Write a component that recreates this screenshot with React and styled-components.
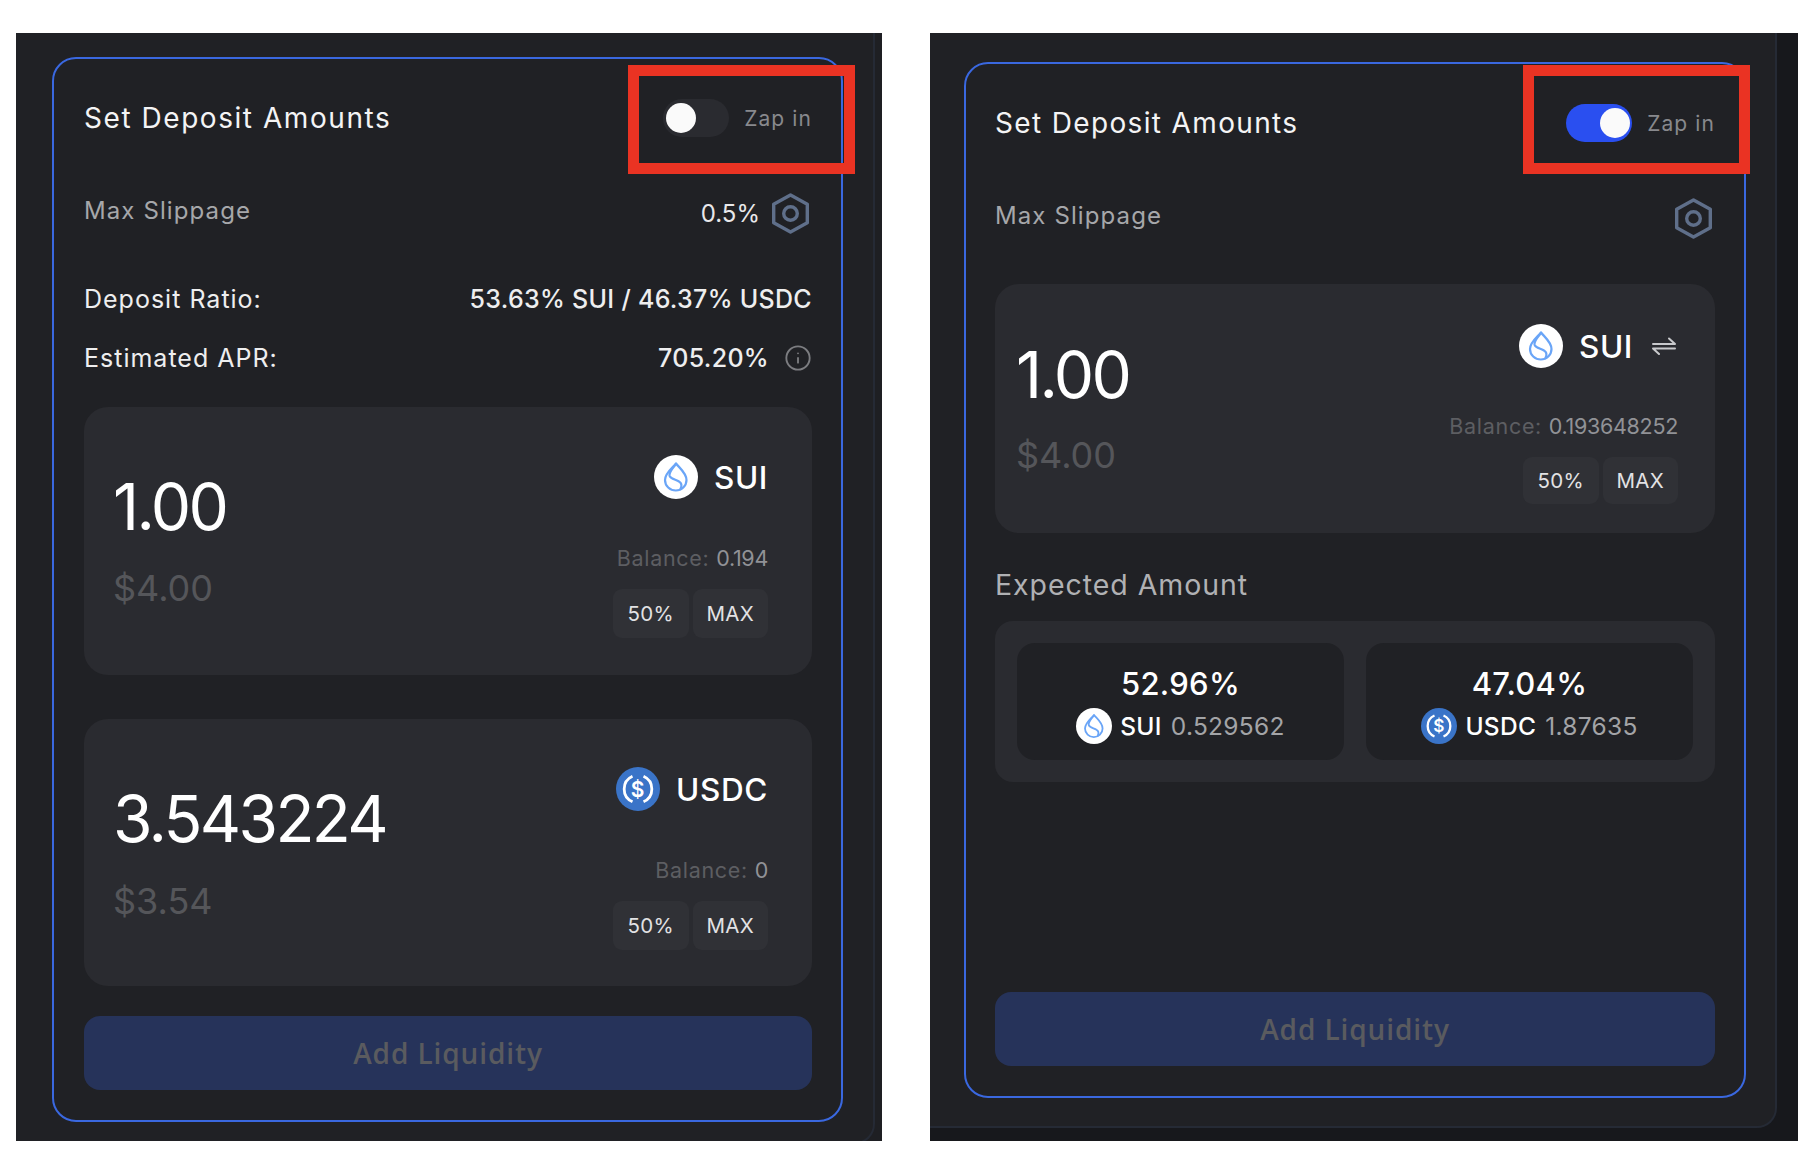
import React from 'react';
import styled, { createGlobalStyle } from 'styled-components';
import { Info } from 'lucide-react';

const Global = createGlobalStyle`
  html, body { margin: 0; padding: 0; background: #fff; }
  body { font-family: 'Inter', 'Liberation Sans', sans-serif; }
`;

const Page = styled.div`
  display: flex;
  gap: 48px;
  width: 1814px;
  height: 1162px;
  padding: 33px 16px 20px;
  box-sizing: border-box;
`;

const Panel = styled.div`
  width: ${p => p.$width}px;
  height: 1108px;
  overflow: hidden;
  background: ${p => p.$bg};
`;

const PanelInner = styled.div`
  box-sizing: border-box;
  width: ${p => p.$width}px;
  height: ${p => p.$height}px;
  padding: ${p => p.$top}px 0 0 ${p => p.$left}px;
  background: #202125;
  border-right: 2px solid #252a35;
  border-bottom: 2px solid #252a35;
  border-bottom-right-radius: 20px;
`;

const DepositCard = styled.section`
  position: relative;
  box-sizing: border-box;
  display: flex;
  flex-direction: column;
  width: ${p => p.$width}px;
  height: ${p => p.$height}px;
  padding: 40px 29px 30px ${p => p.$left}px;
  border: 2px solid #3a68e0;
  border-radius: 24px;
  color: #fff;
`;

const Annotation = styled.div`
  position: absolute;
  top: ${p => p.$top}px;
  right: ${p => p.$right}px;
  box-sizing: border-box;
  width: 227px;
  height: 109px;
  border: 11px solid #ea3323;
`;

const Header = styled.div`
  display: flex;
  align-items: center;
  justify-content: space-between;
  height: 38px;
`;

const Title = styled.h2`
  margin: 0;
  font-size: 28px;
  font-weight: 400;
  letter-spacing: ${p => (p.$tight ? 1.35 : 1.55)}px;
  color: #f4f4f5;
`;

const ZapGroup = styled.div`
  display: flex;
  align-items: center;
  gap: 15px;
`;

const Track = styled.div`
  box-sizing: border-box;
  display: flex;
  align-items: center;
  justify-content: ${p => (p.$on ? 'flex-end' : 'flex-start')};
  width: 66px;
  height: 38px;
  padding: 0 ${p => (p.$on ? 2 : 3)}px;
  border-radius: 19px;
  background: ${p => (p.$on ? '#2a4ff0' : '#2a2b30')};
`;

const Knob = styled.div`
  width: 30px;
  height: 30px;
  border-radius: 50%;
  background: #fafafa;
`;

const ZapLabel = styled.span`
  font-size: 21px;
  letter-spacing: 1.1px;
  color: #88898d;
`;

const SlippageRow = styled.div`
  display: flex;
  align-items: center;
  justify-content: space-between;
  height: 41px;
  margin-top: 56px;
  padding-right: 3px;
`;

const SlippageLabel = styled.span`
  position: relative;
  top: -3px;
  font-size: 24px;
  letter-spacing: 1.1px;
  color: #a6a7aa;
`;

const SlippageValue = styled.div`
  display: flex;
  align-items: center;
  gap: 12px;
  font-size: 24px;
  color: #e8e8ea;
`;

const InfoRow = styled.div`
  display: flex;
  align-items: center;
  justify-content: space-between;
  height: 30px;
  margin-top: ${p => p.$top}px;
  font-size: 25px;
  letter-spacing: 1px;
  color: #eeeeef;
`;

const InfoValue = styled.div`
  display: flex;
  align-items: center;
  gap: 15px;
  font-weight: 500;
  letter-spacing: 0.3px;
`;

const TokenCard = styled.div`
  box-sizing: border-box;
  display: flex;
  justify-content: space-between;
  flex: none;
  height: ${p => p.$height}px;
  margin-top: ${p => p.$top}px;
  padding: 0 ${p => p.$right}px 0 ${p => p.$left}px;
  border-radius: 24px;
  background: #2a2b30;
`;

const AmountColumn = styled.div`
  display: flex;
  flex-direction: column;
  padding-top: ${p => p.$top}px;
`;

const Amount = styled.div`
  font-size: 64px;
  line-height: 60px;
  font-weight: 400;
  letter-spacing: -2.6px;
  color: #fff;
`;

const Usd = styled.div`
  margin-top: ${p => p.$top}px;
  font-size: 36px;
  line-height: 40px;
  color: #55565a;
`;

const TokenColumn = styled.div`
  display: flex;
  flex-direction: column;
  align-items: flex-end;
  padding-top: ${p => p.$top}px;
`;

const TokenRow = styled.div`
  display: flex;
  align-items: center;
  gap: 16px;
  height: 44px;
  font-size: 31.5px;
  font-weight: 500;
  letter-spacing: 0.6px;
  color: #fff;
`;

const SwapIcon = styled.svg`
  width: 24px;
  height: 18px;
  margin: 0 2px 0 3px;
`;

const Balance = styled.div`
  margin-top: ${p => p.$top}px;
  font-size: 21.5px;
  line-height: 26px;
  letter-spacing: 0.7px;
  color: #5d5e62;
`;

const BalanceValue = styled.span`
  color: #919296;
  letter-spacing: -0.3px;
`;

const PercentButtons = styled.div`
  display: flex;
  gap: 4px;
  margin-top: 18px;
`;

const PercentButton = styled.button`
  width: 75.5px;
  height: ${p => p.$height}px;
  padding: 0;
  border: 0;
  border-radius: 9px;
  background: #303136;
  color: #e2e2e4;
  font-family: inherit;
  font-size: 20.5px;
  letter-spacing: 0.3px;
`;

const AddLiquidity = styled.button`
  flex: none;
  height: 74px;
  margin-top: auto;
  border: 0;
  border-radius: 16px;
  background: #26335a;
  color: #5a5b5f;
  font-family: 'Open Sans', sans-serif;
  font-size: 28px;
  font-weight: 600;
  letter-spacing: 0.9px;
`;

const SectionTitle = styled.h3`
  margin: 35px 0 0;
  font-size: 28.5px;
  line-height: 34px;
  font-weight: 400;
  letter-spacing: 0.95px;
  color: #b0b1b4;
`;

const ExpectedBox = styled.div`
  display: grid;
  grid-template-columns: 1fr 1fr;
  gap: 22px;
  margin-top: 19px;
  padding: 22px;
  border-radius: 18px;
  background: #2a2b30;
`;

const ExpectedItem = styled.div`
  display: flex;
  flex-direction: column;
  align-items: center;
  height: 117px;
  padding-top: 21px;
  box-sizing: border-box;
  border-radius: 18px;
  background: #202125;
`;

const ExpectedPercent = styled.div`
  font-size: 31px;
  line-height: 40px;
  font-weight: 500;
  letter-spacing: 0.3px;
`;

const ExpectedLine = styled.div`
  display: flex;
  align-items: center;
  gap: 8px;
  height: 36px;
  margin-top: 4px;
  font-size: 24.5px;
  letter-spacing: 0.3px;
`;

const ExpectedSymbol = styled.span`
  font-weight: 500;
  color: #fff;
`;

const ExpectedAmount = styled.span`
  margin-left: 1px;
  letter-spacing: 0.3px;
  color: #a3a4a7;
`;

const SuiIcon = ({ size = 44 }) => (
  <svg width={size} height={size} viewBox="0 0 44 44">
    <circle cx="22" cy="22" r="22" fill="#fff" />
    <g fill="none" stroke="#6aa5f7" strokeWidth="2.2" strokeLinejoin="round" strokeLinecap="round">
      <path d="M22 8.500C25 12.500 32.500 18 32.500 25 32.500 31 27.500 35.500 21.800 35.500 16 35.500 11 31 11 25 11 18 19 12.500 22 8.500z" />
      <path d="M22 9C19 13 15 17 15.500 20.500 16.200 24 22 24.500 25 26.500 27.500 28 28 31 26.500 34" />
    </g>
  </svg>
);

const UsdcIcon = ({ size = 44 }) => (
  <svg width={size} height={size} viewBox="0 0 44 44">
    <circle cx="22" cy="22" r="22" fill="#3a74c8" />
    <path d="M16.500 9.200a14 14 0 0 0 0 25.600" fill="none" stroke="#fff" strokeWidth="2.800" />
    <path d="M27.500 9.200a14 14 0 0 1 0 25.600" fill="none" stroke="#fff" strokeWidth="2.800" />
    <text x="22" y="29.500" textAnchor="middle" fontFamily="Inter, sans-serif" fontSize="21" fontWeight="600" fill="#fff">$</text>
  </svg>
);

const GearIcon = () => (
  <svg width="37" height="41" viewBox="0 0 37 41" fill="none" stroke="#5f6f8a">
    <path d="M18.500 2 35.300 11.200v18.600L18.500 39 1.700 29.800V11.200z" strokeWidth="3.400" strokeLinejoin="round" />
    <circle cx="18.500" cy="20.500" r="6.800" strokeWidth="3.400" />
  </svg>
);

const Toggle = ({ on }) => (
  <ZapGroup>
    <Track $on={on}>
      <Knob />
    </Track>
    <ZapLabel>Zap in</ZapLabel>
  </ZapGroup>
);

const Token = ({ symbol, swap }) => (
  <TokenRow>
    {symbol === 'SUI' ? <SuiIcon /> : <UsdcIcon />}
    {symbol}
    {swap && (
      <SwapIcon viewBox="0 0 24 18" fill="none" stroke="#c8c9cc" strokeWidth="2" strokeLinecap="round" strokeLinejoin="round">
        <path d="M1 7h22l-6-5.500" />
        <path d="M23 11.500H1l6 5.500" />
      </SwapIcon>
    )}
  </TokenRow>
);

const TokenPanel = ({ amount, usd, symbol, balance, swap, height, top, left, right, amountTop, usdTop, tokenTop, balanceTop, buttonHeight }) => (
  <TokenCard $height={height} $top={top} $left={left} $right={right}>
    <AmountColumn $top={amountTop}>
      <Amount>{amount}</Amount>
      <Usd $top={usdTop}>{usd}</Usd>
    </AmountColumn>
    <TokenColumn $top={tokenTop}>
      <Token symbol={symbol} swap={swap} />
      <Balance $top={balanceTop}>
        Balance: <BalanceValue>{balance}</BalanceValue>
      </Balance>
      <PercentButtons>
        <PercentButton $height={buttonHeight}>50%</PercentButton>
        <PercentButton $height={buttonHeight}>MAX</PercentButton>
      </PercentButtons>
    </TokenColumn>
  </TokenCard>
);

export default function App() {
  return (
    <>
      <Global />
      <Page>
        <Panel $width={866} $bg="#1e1f23">
          <PanelInner $width={859} $height={1111} $top={24} $left={36}>
            <DepositCard $width={791} $height={1065} $left={30}>
              <Annotation $top={6} $right={-14} />
              <Header>
                <Title>Set Deposit Amounts</Title>
                <Toggle />
              </Header>
              <SlippageRow>
                <SlippageLabel>Max Slippage</SlippageLabel>
                <SlippageValue>
                  0.5%
                  <GearIcon />
                </SlippageValue>
              </SlippageRow>
              <InfoRow $top={50}>
                <span>Deposit Ratio:</span>
                <InfoValue>53.63% SUI / 46.37% USDC</InfoValue>
              </InfoRow>
              <InfoRow $top={29}>
                <span>Estimated APR:</span>
                <InfoValue>
                  705.20%
                  <Info size={28} strokeWidth={1.6} color="#7c7d81" />
                </InfoValue>
              </InfoRow>
              <TokenPanel
                amount="1.00"
                usd="$4.00"
                symbol="SUI"
                balance="0.194"
                height={268}
                top={34}
                left={29}
                right={44}
                amountTop={70}
                usdTop={31}
                tokenTop={48}
                balanceTop={46}
                buttonHeight={49}
              />
              <TokenPanel
                amount="3.543224"
                usd="$3.54"
                symbol="USDC"
                balance="0"
                height={267}
                top={44}
                left={29}
                right={44}
                amountTop={70}
                usdTop={32}
                tokenTop={48}
                balanceTop={46}
                buttonHeight={49}
              />
              <AddLiquidity>Add Liquidity</AddLiquidity>
            </DepositCard>
          </PanelInner>
        </Panel>
        <Panel $width={868} $bg="#17181c">
          <PanelInner $width={847} $height={1095} $top={29} $left={34}>
            <DepositCard $width={782} $height={1036} $left={29}>
              <Annotation $top={1} $right={-6} />
              <Header>
                <Title $tight>Set Deposit Amounts</Title>
                <Toggle on />
              </Header>
              <SlippageRow>
                <SlippageLabel>Max Slippage</SlippageLabel>
                <GearIcon />
              </SlippageRow>
              <TokenPanel
                amount="1.00"
                usd="$4.00"
                symbol="SUI"
                balance="0.193648252"
                swap
                height={249}
                top={45}
                left={21}
                right={37}
                amountTop={61}
                usdTop={30}
                tokenTop={40}
                balanceTop={45}
                buttonHeight={47}
              />
              <SectionTitle>Expected Amount</SectionTitle>
              <ExpectedBox>
                <ExpectedItem>
                  <ExpectedPercent>52.96%</ExpectedPercent>
                  <ExpectedLine>
                    <SuiIcon size={36} />
                    <ExpectedSymbol>SUI</ExpectedSymbol>
                    <ExpectedAmount>0.529562</ExpectedAmount>
                  </ExpectedLine>
                </ExpectedItem>
                <ExpectedItem>
                  <ExpectedPercent>47.04%</ExpectedPercent>
                  <ExpectedLine>
                    <UsdcIcon size={36} />
                    <ExpectedSymbol>USDC</ExpectedSymbol>
                    <ExpectedAmount>1.87635</ExpectedAmount>
                  </ExpectedLine>
                </ExpectedItem>
              </ExpectedBox>
              <AddLiquidity>Add Liquidity</AddLiquidity>
            </DepositCard>
          </PanelInner>
        </Panel>
      </Page>
    </>
  );
}
